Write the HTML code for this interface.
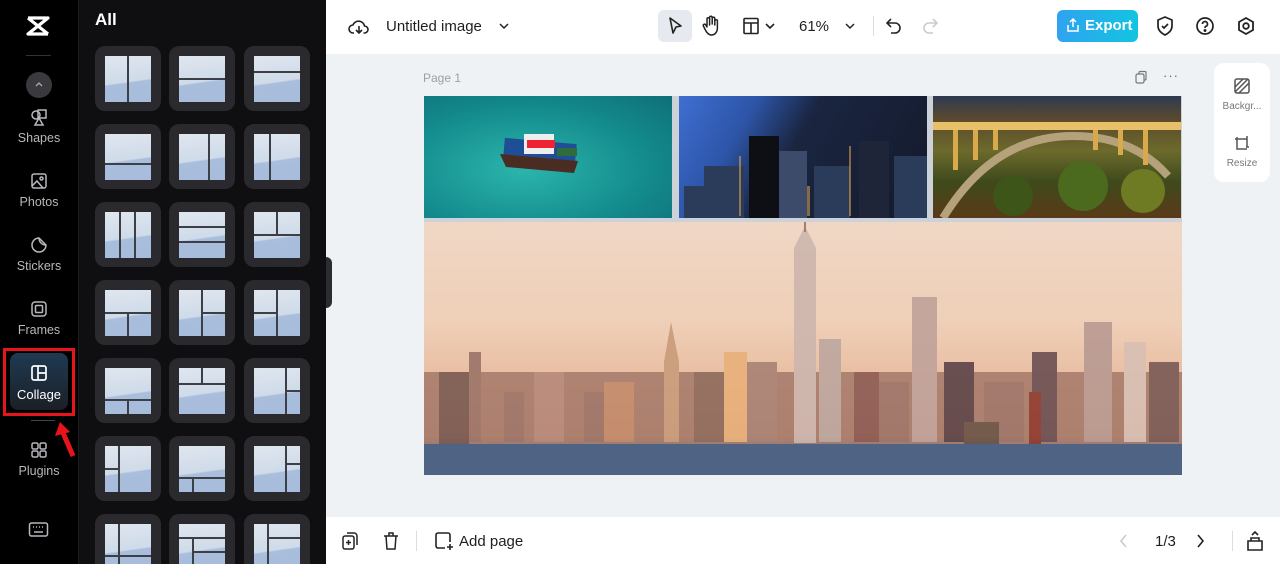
<!DOCTYPE html>
<html style="overflow:hidden;width:1280px;height:564px"><head><meta charset="utf-8"><style>
*{box-sizing:border-box;margin:0;padding:0}
body{width:1280px;height:564px;overflow:hidden;font-family:"Liberation Sans",sans-serif;background:#eff2f5;position:relative}
.rail{position:absolute;left:0;top:0;width:78px;height:564px;background:#000}
.panel{position:absolute;left:78px;top:0;width:248px;height:564px;background:#0f0f11;border-left:1px solid #1c1c1f;overflow:hidden}
.nav{position:absolute;left:0;width:78px;text-align:center;color:#b8b8bd;font-size:12.5px}
.nav svg{display:block;margin:0 auto 4px}
.tile{position:absolute;width:66px;height:65px;background:#2a2a2e;border-radius:10px}
.img{position:absolute;left:10px;top:10px;width:46px;height:46px;overflow:hidden;
background:linear-gradient(172deg,#dfe6ef 0%,#cfdbe9 55%,#a9bddc 58%,#a7bbdb 100%)}
.l{position:absolute;background:#3c3f46}
.v{top:0;bottom:0;width:2px}.h{left:0;right:0;height:2px}
.top{position:absolute;left:326px;top:0;width:954px;height:54px;background:#fff}
.bot{position:absolute;left:326px;top:517px;width:954px;height:47px;background:#fff}
.ph{position:absolute;overflow:hidden}
</style></head><body>
<div class="rail">
 <svg style="position:absolute;left:25px;top:15px" width="26" height="22" viewBox="0 0 26 22"><path d="M3 3h20L3 19h20M3 3l20 16M3 19" stroke="#fff" stroke-width="3.2" fill="none" stroke-linejoin="round"/></svg>
 <div style="position:absolute;left:26px;top:55px;width:25px;height:1px;background:#333"></div>
 <div style="position:absolute;left:26px;top:72px;width:26px;height:26px;border-radius:50%;background:#3a3a3e"></div>
 <svg style="position:absolute;left:34px;top:81px" width="10" height="8"><path d="M2 5l3-3 3 3" stroke="#aaa" fill="none" stroke-width="1.3"/></svg>
 <div class="nav" style="top:107px"><svg width="20" height="20" viewBox="0 0 20 20" fill="none" stroke="#b8b8bd" stroke-width="1.5"><circle cx="7" cy="8" r="4"/><rect x="9" y="3" width="8" height="8"/><path d="M10 11l4 7H6z"/></svg>Shapes</div>
 <div class="nav" style="top:171px"><svg width="20" height="20" viewBox="0 0 20 20" fill="none" stroke="#b8b8bd" stroke-width="1.5"><rect x="3" y="3" width="14" height="14" rx="2"/><circle cx="12.5" cy="7.5" r="1.5"/><path d="M3 15l5-5 6 7"/></svg>Photos</div>
 <div class="nav" style="top:235px"><svg width="20" height="20" viewBox="0 0 20 20" fill="none" stroke="#b8b8bd" stroke-width="1.5"><path d="M10 3a7 7 0 1 0 7 7l-7-7z"/><path d="M10 3c0 4 3 7 7 7"/></svg>Stickers</div>
 <div class="nav" style="top:299px"><svg width="20" height="20" viewBox="0 0 20 20" fill="none" stroke="#b8b8bd" stroke-width="1.5"><rect x="3" y="3" width="14" height="14" rx="3"/><rect x="6.5" y="6.5" width="7" height="7" rx="1"/></svg>Frames</div>
 <div style="position:absolute;left:3px;top:348px;width:72px;height:68px;border:3px solid #e8141c"></div>
 <div style="position:absolute;left:10px;top:353px;width:58px;height:57px;border-radius:8px;background:linear-gradient(#1f3a52,#1b1f26)"></div>
 <div class="nav" style="top:363px;color:#fff;font-size:13px"><svg width="20" height="20" viewBox="0 0 20 20" fill="none" stroke="#fff" stroke-width="1.7"><rect x="3" y="3" width="14" height="14" rx="2"/><path d="M9 3v14M9 10h8"/></svg>Collage</div>
 <div style="position:absolute;left:31px;top:420px;width:24px;height:1px;background:#444"></div>
 <svg style="position:absolute;left:55px;top:422px" width="22" height="38" viewBox="0 0 22 38"><path d="M6 6l12 28" stroke="#e8141c" stroke-width="5"/><path d="M0 14L5 0l10 10z" fill="#e8141c"/></svg>
 <div class="nav" style="top:440px"><svg width="20" height="20" viewBox="0 0 20 20" fill="none" stroke="#b8b8bd" stroke-width="1.5"><rect x="3" y="3" width="6" height="6" rx="1.5"/><rect x="11" y="3" width="6" height="6" rx="1.5"/><rect x="3" y="11" width="6" height="6" rx="1.5"/><rect x="11" y="11" width="6" height="6" rx="1.5"/></svg>Plugins</div>
 <svg style="position:absolute;left:28px;top:521px" width="21" height="18" viewBox="0 0 21 18" fill="none" stroke="#b8b8bd" stroke-width="1.5"><rect x="1.5" y="2" width="18" height="13" rx="2"/><path d="M5 6h1M8 6h1M11 6h1M14 6h1M6 11h9"/></svg>
</div>
<div class="panel">
 <div style="position:absolute;left:16px;top:10px;color:#fff;font-weight:bold;font-size:17px">All</div>
 <div id="tiles"></div>
</div>
<div style="position:absolute;left:326px;top:257px;width:6px;height:51px;background:#2c2c30;border-radius:0 6px 6px 0"></div>

<div class="top">
 <svg style="position:absolute;left:22px;top:17px" width="22" height="20" viewBox="0 0 22 20" fill="none" stroke="#222" stroke-width="1.6"><path d="M6 16h-1a4 4 0 0 1 0-8 6 6 0 0 1 11.5 1 3.5 3.5 0 0 1 0 7h-1"/><path d="M8 13l3 3 3-3"/><path d="M11 9v7"/></svg>
 <div style="position:absolute;left:60px;top:18px;font-size:15px;color:#1f1f1f">Untitled image</div>
 <svg style="position:absolute;left:172px;top:21px" width="12" height="10"><path d="M2 3l4 4 4-4" stroke="#222" fill="none" stroke-width="1.5"/></svg>
 <div style="position:absolute;left:332px;top:10px;width:34px;height:32px;background:#e6eaf0;border-radius:6px"></div>
 <svg style="position:absolute;left:340px;top:16px" width="18" height="20" viewBox="0 0 18 20" fill="none" stroke="#222" stroke-width="1.6" stroke-linejoin="round"><path d="M4 2l11 8-5 1-3 6z"/></svg>
 <svg style="position:absolute;left:375px;top:15px" width="20" height="22" viewBox="0 0 20 22" fill="none" stroke="#222" stroke-width="1.5" stroke-linecap="round"><path d="M6 11V4a1.3 1.3 0 0 1 2.6 0v6M8.6 9V2.6a1.3 1.3 0 0 1 2.6 0V9M11.2 9V3.6a1.3 1.3 0 0 1 2.6 0V10M13.8 10V6a1.3 1.3 0 0 1 2.6 0v7c0 4-2.5 7-6 7-3 0-4.5-2-6-5l-2-4a1.3 1.3 0 0 1 2.3-1.2L6 12"/></svg>
 <svg style="position:absolute;left:416px;top:17px" width="36" height="18" viewBox="0 0 36 18" fill="none" stroke="#222" stroke-width="1.6"><rect x="2" y="1.5" width="14" height="15" rx="1"/><path d="M2 6h14M9 6v10.5M24 7l4 4 4-4"/></svg>
 <div style="position:absolute;left:473px;top:18px;font-size:15px;color:#1f1f1f">61%</div>
 <svg style="position:absolute;left:518px;top:21px" width="12" height="10"><path d="M2 3l4 4 4-4" stroke="#222" fill="none" stroke-width="1.5"/></svg>
 <div style="position:absolute;left:547px;top:16px;width:1px;height:20px;background:#ddd"></div>
 <svg style="position:absolute;left:558px;top:16px" width="20" height="20" viewBox="0 0 20 20" fill="none" stroke="#222" stroke-width="1.6"><path d="M7 3L3 7l4 4"/><path d="M3 7h8a5 5 0 0 1 0 10H7"/></svg>
 <svg style="position:absolute;left:594px;top:16px" width="20" height="20" viewBox="0 0 20 20" fill="none" stroke="#c8ccd2" stroke-width="1.6"><path d="M13 3l4 4-4 4"/><path d="M17 7H9a5 5 0 0 0 0 10h4"/></svg>
 <div style="position:absolute;left:731px;top:10px;width:81px;height:32px;border-radius:6px;background:linear-gradient(90deg,#2fa3f0,#12c4e0);color:#fff;font-weight:bold;font-size:15px;line-height:32px;padding-left:28px">Export</div>
 <svg style="position:absolute;left:740px;top:17px" width="14" height="16" viewBox="0 0 14 16" fill="none" stroke="#fff" stroke-width="1.5"><path d="M7 10V2M4 5l3-3 3 3M2 8v6h10V8"/></svg>
 <svg style="position:absolute;left:829px;top:15px" width="20" height="22" viewBox="0 0 20 22" fill="none" stroke="#222" stroke-width="1.7"><path d="M10 2l7 3v6c0 4-3 7-7 9-4-2-7-5-7-9V5z"/><path d="M7 11l2 2 4-4"/></svg>
 <svg style="position:absolute;left:869px;top:16px" width="20" height="20" viewBox="0 0 20 20" fill="none" stroke="#222" stroke-width="1.7"><circle cx="10" cy="10" r="8"/><path d="M7.5 8a2.5 2.5 0 1 1 3.5 2.3c-.8.4-1 1-1 1.7"/><circle cx="10" cy="14.5" r=".6" fill="#222"/></svg>
 <svg style="position:absolute;left:910px;top:16px" width="20" height="20" viewBox="0 0 20 20" fill="none" stroke="#222" stroke-width="1.8"><path d="M10 2l7 4v8l-7 4-7-4V6z"/><circle cx="10" cy="10" r="2.8"/></svg>
</div>

<div style="position:absolute;left:423px;top:71px;font-size:12px;color:#9aa0a8">Page 1</div>
<svg style="position:absolute;left:1134px;top:70px" width="14" height="14" viewBox="0 0 14 14" fill="none" stroke="#777" stroke-width="1.2"><rect x="2" y="4" width="8" height="9" rx="1.5"/><path d="M5 4V2.5A1 1 0 0 1 6 1.5h5a1 1 0 0 1 1 1V9a1 1 0 0 1-1 1h-1"/></svg>
<div style="position:absolute;left:1163px;top:68px;font-size:13px;color:#666;letter-spacing:1px">···</div>

<div style="position:absolute;left:1214px;top:63px;width:56px;height:119px;background:#fff;border-radius:10px"></div>
<svg style="position:absolute;left:1233px;top:77px" width="18" height="18" viewBox="0 0 18 18" fill="none" stroke="#555" stroke-width="1.5"><rect x="2" y="2" width="14" height="14" rx="2"/><path d="M2 10l8-8M6 16l10-10M2 15L15 2"/></svg>
<div style="position:absolute;left:1214px;top:101px;width:56px;text-align:center;font-size:10px;color:#777">Backgr...</div>
<svg style="position:absolute;left:1233px;top:135px" width="18" height="18" viewBox="0 0 18 18" fill="none" stroke="#555" stroke-width="1.5"><path d="M4 2v12h10M2 4h12v8M14 1v3M16 12h-3"/></svg>
<div style="position:absolute;left:1214px;top:158px;width:56px;text-align:center;font-size:10px;color:#777">Resize</div>

<div style="position:absolute;left:424px;top:96px;width:758px;height:379px;background:#cdd2d8"></div>
<div class="ph" style="left:424px;top:96px;width:248px;height:122px;background:radial-gradient(ellipse at 40% 60%,#2bb5ad,#138a8c 60%,#0f6f78)">
 <svg width="248" height="122"><rect x="80" y="45" width="72" height="18" fill="#1d4e96" transform="rotate(5 116 54)"/><path d="M76 58l78 7-4 12-68-6z" fill="#4a2c22"/><rect x="100" y="38" width="30" height="20" fill="#eee"/><rect x="103" y="44" width="28" height="8" fill="#e23"/><rect x="133" y="52" width="20" height="8" fill="#2e6b3d"/></svg>
</div>
<div class="ph" style="left:679px;top:96px;width:248px;height:122px;background:linear-gradient(120deg,#3f6fd1 0%,#2d55a8 25%,#1a2540 45%,#141a2c 100%)">
 <svg width="248" height="122"><g fill="#2b3b5a"><rect x="5" y="90" width="20" height="32"/><rect x="25" y="70" width="40" height="52"/><rect x="70" y="40" width="30" height="82" fill="#0d0f14"/><rect x="100" y="55" width="28" height="67" fill="#3d4b6a"/><rect x="135" y="70" width="36" height="52"/><rect x="180" y="45" width="30" height="77" fill="#1e2538"/><rect x="215" y="60" width="33" height="62"/></g><g fill="#f2b451" opacity=".5"><rect x="60" y="60" width="2" height="60"/><rect x="170" y="50" width="2" height="70"/><rect x="128" y="90" width="3" height="30"/></g></svg>
</div>
<div class="ph" style="left:933px;top:96px;width:248px;height:122px;background:linear-gradient(#2e3a52 0%,#5c4a2c 20%,#6c6a2c 45%,#3f4a1c 70%,#5a3a18 100%)">
 <svg width="248" height="122"><rect x="0" y="26" width="248" height="8" fill="#e8c06a"/><path d="M10 122Q60 40 140 40Q200 40 235 80" stroke="#b6a27a" stroke-width="8" fill="none"/><g fill="#d9a94b"><rect x="20" y="34" width="5" height="40"/><rect x="40" y="34" width="5" height="30"/><rect x="60" y="34" width="5" height="20"/><rect x="160" y="34" width="5" height="20"/><rect x="185" y="34" width="5" height="25"/><rect x="210" y="34" width="5" height="35"/></g><circle cx="150" cy="90" r="25" fill="#4b6a1e"/><circle cx="210" cy="95" r="22" fill="#6e7b23"/><circle cx="80" cy="100" r="20" fill="#3d5518"/></svg>
</div>
<div class="ph" style="left:424px;top:222px;width:758px;height:253px;background:linear-gradient(#f0d7c5 0%,#efcfb7 40%,#e6b79a 70%,#d59f85 85%,#5a6f8c 88%,#4a5f80 100%)">
 <svg width="758" height="253" style="position:absolute;left:0;top:0"><g fill="#9c7468" opacity=".9">
 <rect x="0" y="150" width="758" height="72" fill="#a97d6c"/>
 <rect x="15" y="150" width="30" height="72" fill="#7a5a52"/><rect x="45" y="130" width="12" height="90"/>
 <rect x="80" y="170" width="20" height="50"/><rect x="110" y="150" width="30" height="70" fill="#b7897a"/>
 <rect x="160" y="170" width="25" height="50"/><rect x="180" y="160" width="30" height="60" fill="#c38b6b"/>
 <rect x="240" y="140" width="15" height="80" fill="#c99c7a"/><path d="M240 140l7-40 8 40z" fill="#c99c7a"/>
 <rect x="270" y="150" width="30" height="70" fill="#8e6a5c"/><rect x="300" y="130" width="23" height="90" fill="#e8b07a"/>
 <rect x="323" y="140" width="30" height="80" fill="#a88274"/>
 <rect x="370" y="26" width="22" height="195" fill="#cdb6ae"/><path d="M370 26l11-22 11 22z" fill="#cdb6ae"/><rect x="380" y="0" width="2" height="10"/>
 <rect x="395" y="117" width="22" height="103" fill="#bda79f"/>
 <rect x="430" y="150" width="25" height="70" fill="#8c5a52"/><rect x="488" y="75" width="25" height="145" fill="#c0a29a"/>
 <rect x="455" y="160" width="30" height="60"/><rect x="520" y="140" width="30" height="80" fill="#5c4348"/>
 <rect x="560" y="160" width="40" height="60"/><rect x="608" y="130" width="25" height="90" fill="#6c4f52"/>
 <rect x="660" y="100" width="28" height="120" fill="#b99a92"/><rect x="700" y="120" width="22" height="100" fill="#d8c0b4"/>
 <rect x="725" y="140" width="30" height="80" fill="#7a5a56"/>
 <rect x="540" y="200" width="35" height="25" fill="#6a5446"/><rect x="605" y="170" width="12" height="55" fill="#8e3a2e"/>
 </g><rect x="0" y="222" width="758" height="31" fill="#4f6384"/></svg>
</div>

<div class="bot">
 <svg style="position:absolute;left:15px;top:14px" width="18" height="20" viewBox="0 0 18 20" fill="none" stroke="#222" stroke-width="1.5"><rect x="2" y="5" width="11" height="13" rx="2"/><path d="M6 2h7a3 3 0 0 1 3 3v9M7.5 9v5M5 11.5h5"/></svg>
 <svg style="position:absolute;left:56px;top:14px" width="18" height="20" viewBox="0 0 18 20" fill="none" stroke="#222" stroke-width="1.5"><path d="M2 5h14M7 5V2h4v3M4 5l1 13h8l1-13"/></svg>
 <div style="position:absolute;left:90px;top:14px;width:1px;height:20px;background:#ddd"></div>
 <svg style="position:absolute;left:108px;top:14px" width="20" height="20" viewBox="0 0 20 20" fill="none" stroke="#222" stroke-width="1.6"><path d="M11 17H4a2 2 0 0 1-2-2V4a2 2 0 0 1 2-2h10a2 2 0 0 1 2 2v7M16 13v6M13 16h6"/></svg>
 <div style="position:absolute;left:133px;top:16px;font-size:15px;color:#1f1f1f">Add page</div>
 <svg style="position:absolute;left:792px;top:16px" width="12" height="16"><path d="M8 2L3 8l5 6" stroke="#c5c9cf" fill="none" stroke-width="1.5"/></svg>
 <div style="position:absolute;left:829px;top:16px;font-size:15px;color:#1f1f1f">1/3</div>
 <svg style="position:absolute;left:868px;top:16px" width="12" height="16"><path d="M4 2l5 6-5 6" stroke="#222" fill="none" stroke-width="1.6"/></svg>
 <div style="position:absolute;left:906px;top:14px;width:1px;height:20px;background:#ddd"></div>
 <svg style="position:absolute;left:919px;top:13px" width="20" height="22" viewBox="0 0 20 22" fill="none" stroke="#222" stroke-width="1.6"><path d="M7 5l3-3 3 3M3 11h14v9H3zM6 11V8h8v3"/></svg>
</div>

<script>
var L=[
"v50","h50","h35",
"h65","v66","v34",
"v33,v66","h33,h66","h50;v50:0-50",
"h50;v50:50-100","v50;h50:50-100","v50;h50:0-50",
"h70;v50:70-100","h35;v50:0-35","v70;h50:70-100",
"v30;h50:0-30","h70;v30:70-100","v70;h40:70-100",
"v30;h70","h30;v30:30-100;h60:30-100","v30;h30:30-100"];
var h='';
for(var i=0;i<21;i++){var r=Math.floor(i/3),c=i%3;var x=[16,90,165][c],y=46+r*78;
var s='';L[i].split(';').forEach(function(p){p.split(',').forEach(function(q){var t=q[0],m=q.slice(1).split(':'),v=+m[0];
var st='';if(m[1]){var a=m[1].split('-');if(t=='v')st='top:'+a[0]+'%;bottom:'+(100-a[1])+'%;';else st='left:'+a[0]+'%;right:'+(100-a[1])+'%;';}
s+='<div class="l '+t+'" style="'+(t=='v'?'left:':'top:')+'calc('+v+'% - 1px);'+st+'"></div>';});});
h+='<div class="tile" style="left:'+x+'px;top:'+y+'px"><div class="img">'+s+'</div></div>';}
document.getElementById('tiles').innerHTML=h;
</script>
</body></html>
